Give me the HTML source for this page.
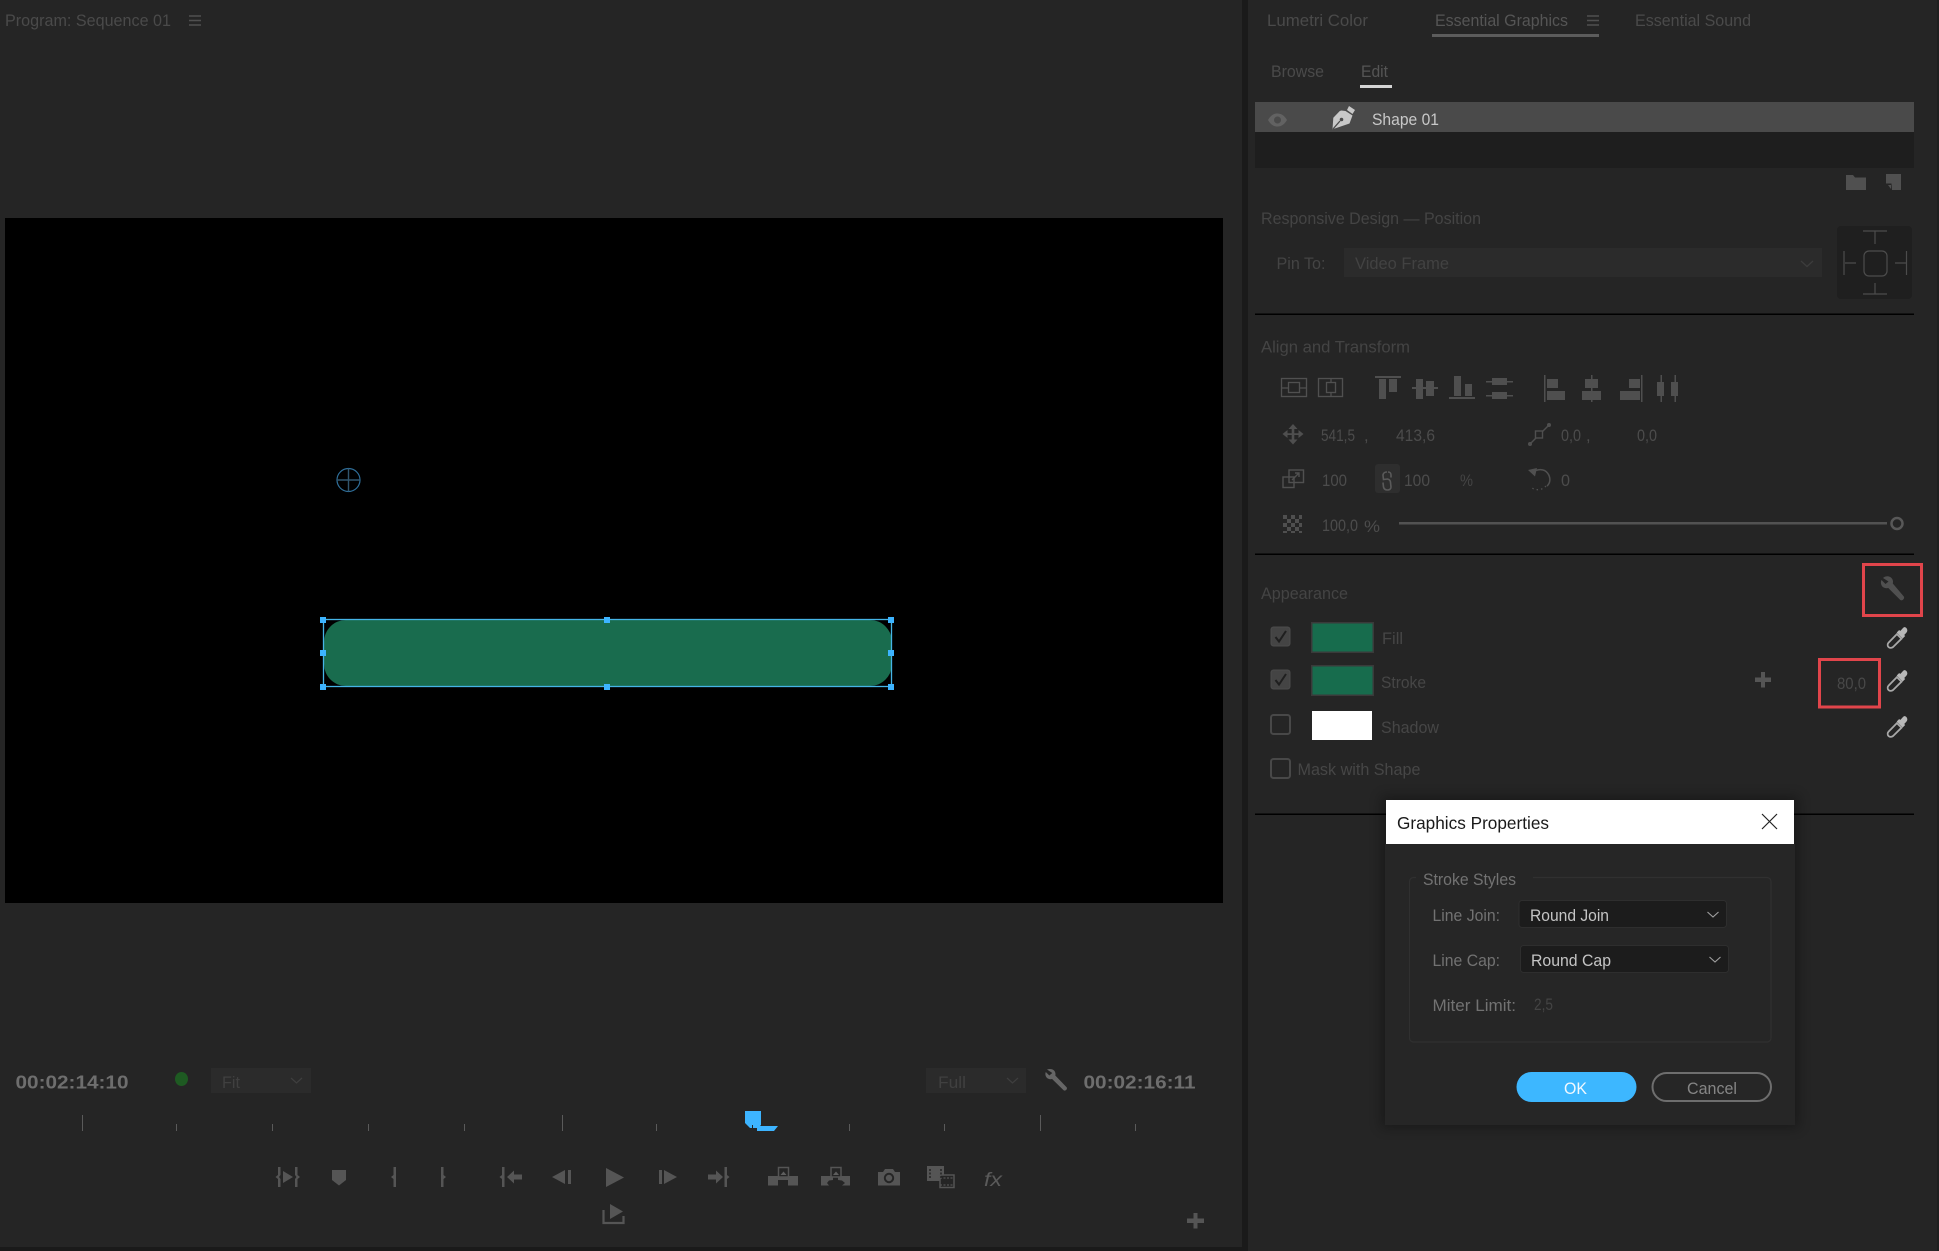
<!DOCTYPE html>
<html lang="en"><head><meta charset="utf-8"><title>Program: Sequence 01 - Essential Graphics</title>
<style>
html,body{margin:0;padding:0;background:#252525;width:1939px;height:1251px;overflow:hidden}
svg{display:block}
text{font-family:"Liberation Sans",sans-serif;font-size:16.5px;fill:#4a4a4a}
.g{fill:#555}
.v{fill:#4c4c4c}
.dlg{fill:#727272;font-size:16.5px}
</style></head><body>
<svg xmlns="http://www.w3.org/2000/svg" width="1939" height="1251" viewBox="0 0 1939 1251">
<defs>
<filter id="sh" x="-10%" y="-10%" width="120%" height="120%"><feGaussianBlur stdDeviation="6"/></filter>
<g id="drop">
<path d="M18.500 .8c1.500-.6 3.200 1 3.300 2.800.1 1.200-.5 2.200-1.300 3l-1.800 1.900 1 1-2.500 2.500-6-6 2.500-2.500 1 1 1.800-1.900c.7-.8 1.400-1.500 2-1.800z" fill="#b8b8b8"/>
<path d="M11.400 7.600l4.600 4.600-8.400 8.300c-1.500 1.200-3.500 1.100-4.600 0s-1.100-3 .1-4.400z" fill="none" stroke="#a8a8a8" stroke-width="1.800"/>
</g>
<g id="chk"><rect x="1" y="1" width="19" height="19" rx="2.500" fill="#444" stroke="#4c4c4c"/><path d="M5.500 11l3.500 4.500 7-10.500" fill="none" stroke="#1f1f1f" stroke-width="2"/></g>
</defs>

<rect width="1939" height="1251" fill="#252525"/>
<!-- gutters -->
<rect x="1242" y="0" width="6" height="1251" fill="#1a1a1a"/>
<rect x="0" y="1247" width="1242" height="4" fill="#1a1a1a"/>
<rect x="1937" y="0" width="2" height="1251" fill="#1f1f1f"/>

<!-- program header -->
<text x="5" y="26" textLength="166" lengthAdjust="spacingAndGlyphs">Program: Sequence 01</text>
<path d="M189 16h12M189 20.500h12M189 25h12" stroke="#505050" stroke-width="1.500"/>

<!-- video -->
<rect x="5" y="218" width="1218" height="685" fill="#000"/>
<ellipse cx="348.500" cy="480" rx="11.500" ry="11.500" fill="none" stroke="#2f6f9a" stroke-width="1.200"/>
<path d="M337 480h23M348.500 468.500v23" stroke="#31566e" stroke-width="1.400"/>
<rect x="324" y="620" width="568" height="66" rx="22" fill="#196c4e"/>
<rect x="323.500" y="619.500" width="568" height="67" fill="none" stroke="#45b4e6" stroke-width="1.300"/>
<g fill="#3db4ff">
<rect x="320" y="617" width="6" height="6"/><rect x="604" y="617" width="6" height="6"/><rect x="888" y="617" width="6" height="6"/>
<rect x="320" y="650" width="6" height="6"/><rect x="888" y="650" width="6" height="6"/>
<rect x="320" y="684" width="6" height="6"/><rect x="604" y="684" width="6" height="6"/><rect x="888" y="684" width="6" height="6"/>
</g>

<!-- timecode row -->
<text x="15.500" y="1088.500" textLength="113" lengthAdjust="spacingAndGlyphs" style="font-size:18.500px;fill:#6e6e6e;font-weight:bold">00:02:14:10</text>
<ellipse cx="181.500" cy="1079" rx="6.500" ry="7" fill="#1e5a22"/>
<rect x="211" y="1068" width="100" height="25" fill="#2b2b2b"/>
<text x="222" y="1088" textLength="18" lengthAdjust="spacingAndGlyphs" style="fill:#404040">Fit</text>
<path d="M291 1078l5.500 5 5.500-5" fill="none" stroke="#3f3f3f" stroke-width="1.200"/>
<rect x="926" y="1068" width="100" height="25" fill="#2b2b2b"/>
<text x="938" y="1088" textLength="28" lengthAdjust="spacingAndGlyphs" style="fill:#404040">Full</text>
<path d="M1007 1078l5.500 5 5.500-5" fill="none" stroke="#3f3f3f" stroke-width="1.200"/>
<path d="M1047 1069.500c3-1 6-.5 7.500 1.500 1 1.500 1.200 3.200.8 4.500l11.300 11.800c1.300 1.700-1.200 4.300-3 3l-11.500-11.300c-2 .6-4.200 0-5.500-1.500-1.300-1.600-1.600-3.700-.8-5.500l3.500 3.500 3-2.500z" fill="#666"/>
<text x="1083.500" y="1088.500" textLength="112" lengthAdjust="spacingAndGlyphs" style="font-size:18.500px;fill:#6e6e6e;font-weight:bold">00:02:16:11</text>

<!-- ruler -->
<g stroke="#5a5a5a" stroke-width="1">
<path d="M82.500 1115v16M562.500 1115v16M1040.500 1115v16"/>
<path d="M176.500 1124v7M272.500 1124v7M368.500 1124v7M464.500 1124v7M656.500 1124v7M849.500 1124v7M944.500 1124v7M1135.500 1124v7"/>
</g>
<path d="M745 1111h16v14l-3 3h-8l-5-5z" fill="#3db4ff"/>
<path d="M757 1126h21l-4 5h-17z" fill="#3db4ff"/>
<path d="M752.500 1125v6" stroke="#252525"/>

<!-- transport -->
<g fill="#555">
<path d="M278 1167h2.500v8l-1.500 2 1.500 2v8H278v-8l-2.500-2 2.500-2zM295 1167h2.500v8l2.500 2-2.500 2v8H295v-8l1.500-2-1.500-2z"/>
<path d="M283 1171l10 6-10 6z"/>
<path d="M332 1170h14v10l-7 5.500-7-5.500z"/>
<path d="M393.500 1167h2.500v20h-2.500v-8l-2.500-2 2.500-2zM441 1167h2.500v8l2.500 2-2.500 2v8H441z"/>
<path d="M502 1167h2.500v20H502v-8l-2.500-2 2.500-2zM507 1177l7-6.500v4h8v5h-8v4z"/>
<path d="M552 1177l13-7v14zM568 1170h3v14h-3z"/>
<path d="M606 1168l18 9.500-18 9.500z"/>
<path d="M659 1170h3v14h-3zM664 1170l13 7-13 7z"/>
<path d="M708 1174.500h8v-4l7 6.500-7 6.500v-4h-8zM724.500 1167h2.500v8l2.500 2-2.500 2v8h-2.500z"/>
<!-- lift -->
<path d="M768 1176h30v9.500h-10v-5.500h-10v5.500h-10z"/>
<!-- extract -->
<path d="M821 1176h12v4l-4 .5-2 2.500 2 2.500h-8zM838 1176h12v9.500h-8l3-2.500-3-2.500-4-.5z"/>
<path d="M821 1178l6 4-6 4zM850 1178l-6 4 6 4z" fill="#252525" opacity="0"/>
<path d="M878 1172h5l2-3h8l2 3h5v13.500h-22z"/>
<path d="M927 1166h17v15h-17z"/>
<path d="M1187 1218.500h6.500v-5.500h4v5.500h6.500v4.500h-6.500v5.500h-4v-5.500h-6.500z"/>
</g>
<rect x="778.500" y="1167.500" width="10" height="9.500" fill="#252525" stroke="#555" stroke-width="1.500"/>
<path d="M780.500 1175l3-3.500 3 3.500z" fill="#5f5f5f"/>
<rect x="831" y="1167.500" width="10" height="9.500" fill="#252525" stroke="#555" stroke-width="1.500"/>
<path d="M833 1175l3-3.500 3 3.500z" fill="#5f5f5f"/>
<circle cx="889" cy="1178" r="4.200" fill="none" stroke="#252525" stroke-width="2"/>
<rect x="940" y="1175" width="14" height="12.500" fill="#252525" stroke="#555" stroke-width="1.500"/>
<path d="M940 1178h14M940 1185h14" stroke="#555" stroke-width="1.200" stroke-dasharray="2 1.500"/>
<path d="M930 1169v10M941 1169v10" stroke="#252525" stroke-width="1.500" stroke-dasharray="2 1.500"/>
<text x="984" y="1186" textLength="18" lengthAdjust="spacingAndGlyphs" style="font-size:19px;font-style:italic;fill:#5a5a5a">fx</text>
<path d="M603.500 1210v13h20v-7" fill="none" stroke="#555" stroke-width="2.200"/>
<path d="M610 1204l13 7.500-13 7.500z" fill="#555"/>

<!-- tabs -->
<text x="1267" y="26" textLength="101" lengthAdjust="spacingAndGlyphs">Lumetri Color</text>
<text x="1435" y="26" textLength="133" lengthAdjust="spacingAndGlyphs" class="g">Essential Graphics</text>
<path d="M1587 16h12M1587 20.500h12M1587 25h12" stroke="#505050" stroke-width="1.500"/>
<rect x="1432" y="34" width="167" height="3" fill="#5c5c5c"/>
<text x="1635" y="26" textLength="116" lengthAdjust="spacingAndGlyphs">Essential Sound</text>
<text x="1271" y="77" textLength="53" lengthAdjust="spacingAndGlyphs">Browse</text>
<text x="1361" y="77" textLength="27" lengthAdjust="spacingAndGlyphs" class="g">Edit</text>
<rect x="1360" y="85" width="32" height="3" fill="#d4d4d4"/>

<!-- layers -->
<rect x="1255" y="132" width="659" height="36" fill="#1e1e1e"/>
<rect x="1255" y="102" width="659" height="30" fill="#4a4a4a"/>
<path d="M1268 120c3-5 6-6.500 9.500-6.500s6.500 1.500 9.500 6.500c-3 5-6 6.500-9.500 6.500s-6.500-1.500-9.500-6.500z" fill="#626262"/>
<circle cx="1277.500" cy="120" r="3.500" fill="#4a4a4a"/>
<path d="M1349 106l6 4-2.500 4-5.500-4zM1345.500 111l7 4.500-3 8-17 5.800.8-11.500 6.500-6.800 1.500-.5z" fill="#c8c8c8"/>
<path d="M1333 129l7-8" stroke="#4a4a4a" stroke-width="1.300"/>
<circle cx="1341.500" cy="119.500" r="1.800" fill="#4a4a4a"/>
<text x="1372" y="125" textLength="67" lengthAdjust="spacingAndGlyphs" style="fill:#c8c8c8">Shape 01</text>
<path d="M1846 175h7l2 2.500h11v12.500h-20z" fill="#505050"/>
<path d="M1886 174h15v16h-9l-.5-6.500h-5.500z" fill="#505050"/>
<path d="M1888 185h3v4z" fill="#505050"/>

<!-- responsive -->
<text x="1261" y="224" textLength="220" lengthAdjust="spacingAndGlyphs" style="fill:#444">Responsive Design — Position</text>
<text x="1276.500" y="269" textLength="49" lengthAdjust="spacingAndGlyphs" style="fill:#444">Pin To:</text>
<rect x="1344" y="248" width="478" height="29" fill="#2b2b2b"/>
<text x="1355" y="269" textLength="94" lengthAdjust="spacingAndGlyphs" style="fill:#424242">Video Frame</text>
<path d="M1801 261l6 5.500 6-5.500" fill="none" stroke="#3d3d3d" stroke-width="1.200"/>
<rect x="1837" y="226" width="75" height="73" rx="4" fill="#1f1f1f"/>
<g fill="none" stroke="#4c4c4c" stroke-width="1.200">
<path d="M1863 231h24M1875 231v13"/>
<rect x="1864" y="251" width="23" height="25" rx="5"/>
<path d="M1844 251v24M1845 263h11M1906.500 251v24M1895 263h11"/>
<path d="M1875 283v11M1863 294h24"/>
</g>
<rect x="1255" y="313.500" width="659" height="1.500" fill="#000"/>

<!-- align and transform -->
<text x="1261" y="352.500" textLength="149" lengthAdjust="spacingAndGlyphs" style="fill:#444">Align and Transform</text>
<g fill="none" stroke="#505050" stroke-width="1.300">
<rect x="1281.500" y="378.500" width="25" height="18"/><rect x="1288.500" y="382.500" width="11" height="10"/><path d="M1281 388h7M1300 388h7"/>
<rect x="1318.500" y="378.500" width="24" height="18"/><rect x="1326.500" y="382.500" width="9" height="10"/><path d="M1331 378v4M1331 392v4"/>
</g>
<g fill="#4f4f4f">
<path d="M1375 376h26v2h-26zM1379 379h7v20h-7zM1389 379h8v13h-8z"/>
<path d="M1412 387h26v2h-26zM1416 379h7v20h-7zM1426 381h8v15h-8z"/>
<path d="M1449 397h26v2h-26zM1454 376h7v20h-7zM1465 384h7v12h-7z"/>
<path d="M1486 381h27v1.500h-27zM1492 378h15v7h-15zM1486 395h27v1.500h-27zM1492 392h15v7h-15z"/>
<path d="M1544 375h1.500v27h-1.500zM1547 379h11v9h-11zM1547 391h18v9h-18z"/>
<path d="M1591 375h1.500v27h-1.500zM1585 379h13v9h-13zM1582 391h19v9h-19z"/>
<path d="M1641 375h1.500v27h-1.500zM1629 379h11v9h-11zM1620 391h20v9h-20z"/>
<path d="M1660.500 375h1.500v27h-1.500zM1657 382h7v14h-7zM1674.500 375h1.500v27h-1.500zM1671 382h7v14h-7z"/>
</g>
<path d="M1293 424l4.500 5h-3.200v4.200h4.200v-3.200l5 4-5 4v-3h-4.200v4.500h3.200l-4.500 5-4.500-5h3.200v-4.500h-4.200v3l-5-4 5-4v3.200h4.200v-4.200h-3.200z" fill="#4f4f4f"/>
<text x="1321" y="441" textLength="34" lengthAdjust="spacingAndGlyphs" class="v">541,5</text>
<text x="1364" y="441" class="v">,</text>
<text x="1396" y="441" textLength="39" lengthAdjust="spacingAndGlyphs" class="v">413,6</text>
<g fill="none" stroke="#4f4f4f" stroke-width="1.400">
<path d="M1530 444l19-19"/><rect x="1535.500" y="431" width="7" height="7" fill="#252525"/>
</g>
<circle cx="1530" cy="444" r="2" fill="#4f4f4f"/><circle cx="1549" cy="425" r="2" fill="#4f4f4f"/>
<text x="1561" y="441" textLength="20" lengthAdjust="spacingAndGlyphs" class="v">0,0</text>
<text x="1586" y="441" class="v">,</text>
<text x="1637" y="441" textLength="20" lengthAdjust="spacingAndGlyphs" class="v">0,0</text>

<g fill="none" stroke="#505050" stroke-width="1.400">
<rect x="1283" y="477" width="11" height="10.500"/><rect x="1289" y="470" width="14.500" height="12.500"/><path d="M1292 480l7-7M1295 473h4v4"/>
</g>
<text x="1322" y="486" textLength="25" lengthAdjust="spacingAndGlyphs" class="v">100</text>
<rect x="1375" y="464" width="25" height="29" rx="3" fill="#2e2e2e"/>
<path d="M1387 472c-2.500 0-4 1.500-4 3.500l.5 4 4-.5c2 .5 3 1.500 3 3.500l.5 4.500c0 2-1.500 3-3.500 3s-3.500-1-4-3l-.5-4.500M1388 472c2 0 3 1.500 3 3v2.500" fill="none" stroke="#5a5a5a" stroke-width="1.600"/>
<text x="1404" y="486" textLength="26" lengthAdjust="spacingAndGlyphs" class="v">100</text>
<text x="1460" y="486" textLength="13" lengthAdjust="spacingAndGlyphs" style="fill:#444">%</text>
<path d="M1532 473c5-4.500 12-4.500 15.500 0 3.500 4.500 3 10-.5 13" fill="none" stroke="#505050" stroke-width="1.500"/>
<path d="M1546 486c-4 4.500-11 5-15 1" fill="none" stroke="#505050" stroke-width="1.300" stroke-dasharray="1.500 3"/>
<path d="M1528 470l9-2-2 8.500z" fill="#505050"/>
<text x="1561" y="486" textLength="9" lengthAdjust="spacingAndGlyphs" class="v">0</text>

<path d="M1283 515h4v4h-4zM1291 515h4v4h-4zM1299 515h3v4h-3zM1287 519h4v4h-4zM1295 519h4v4h-4zM1283 523h4v4h-4zM1291 523h4v4h-4zM1299 523h3v4h-3zM1287 527h4v4h-4zM1295 527h4v4h-4zM1283 531h4v2h-4zM1291 531h4v2h-4zM1299 531h3v2h-3z" fill="#4f4f4f"/>
<text x="1322" y="531" textLength="36" lengthAdjust="spacingAndGlyphs" class="v">100,0</text>
<text x="1364" y="532" textLength="16" lengthAdjust="spacingAndGlyphs" class="v">%</text>
<rect x="1399" y="522" width="488" height="2.500" fill="#525252"/>
<circle cx="1897" cy="523.500" r="5.500" fill="none" stroke="#585858" stroke-width="2.500"/>
<rect x="1255" y="553.500" width="659" height="1.500" fill="#000"/>

<!-- appearance -->
<text x="1261" y="599" textLength="87" lengthAdjust="spacingAndGlyphs" style="fill:#444">Appearance</text>
<path d="M1883 578c3-2.500 6.500-2 8.500 0 1.500 1.500 1.800 3.500 1.300 5.500l11 13c1.300 1.900-1.500 4.800-3.500 3.500l-12-12c-2 .6-4.500 0-6-1.500-1.500-2-1.800-4.500-.8-6.500l4 4 3-2.500z" fill="#505050"/>
<rect x="1863.500" y="564.500" width="58" height="51" fill="none" stroke="#e1454b" stroke-width="3"/>

<use href="#chk" x="1270" y="626"/>
<rect x="1311" y="622" width="63" height="31" fill="#3a3a3a"/><rect x="1312.500" y="623.500" width="60" height="28" fill="#176c4d"/>
<text x="1382" y="644" textLength="21" lengthAdjust="spacingAndGlyphs" style="fill:#464646">Fill</text>
<use href="#drop" x="1885.500" y="626.500"/>

<use href="#chk" x="1270" y="669"/>
<rect x="1311" y="665" width="63" height="31" fill="#3a3a3a"/><rect x="1312.500" y="666.500" width="60" height="28" fill="#176c4d"/>
<text x="1381" y="688" textLength="45" lengthAdjust="spacingAndGlyphs" style="fill:#464646">Stroke</text>
<path d="M1755 677.500h6v-5.500h4v5.500h6v4.500h-6v5.500h-4v-5.500h-6z" fill="#555"/>
<text x="1837" y="689" textLength="29" lengthAdjust="spacingAndGlyphs" style="fill:#484848">80,0</text>
<rect x="1819.500" y="659.500" width="60" height="47.500" fill="none" stroke="#e1454b" stroke-width="3"/>
<use href="#drop" x="1885.500" y="669.500"/>

<rect x="1271" y="715" width="19" height="19" rx="2.500" fill="none" stroke="#484848" stroke-width="2"/>
<rect x="1312" y="711" width="60" height="29" fill="#fff"/>
<text x="1381" y="733" textLength="58" lengthAdjust="spacingAndGlyphs" style="fill:#464646">Shadow</text>
<use href="#drop" x="1885.500" y="715.500"/>

<rect x="1271" y="759" width="19" height="19" rx="2.500" fill="none" stroke="#484848" stroke-width="2"/>
<text x="1297.500" y="775" textLength="123" lengthAdjust="spacingAndGlyphs" style="fill:#464646">Mask with Shape</text>
<rect x="1255" y="813.500" width="659" height="1.500" fill="#000"/>

<!-- dialog -->
<rect x="1381" y="796" width="418" height="332" fill="#000" opacity=".3" filter="url(#sh)"/>
<rect x="1385" y="844" width="410" height="281" fill="#262626"/>
<rect x="1386" y="800" width="408" height="44" fill="#fff"/>
<text x="1397" y="829" textLength="152" lengthAdjust="spacingAndGlyphs" style="font-size:17.500px;fill:#1a1a1a">Graphics Properties</text>
<path d="M1762 814l15 15M1777 814l-15 15" stroke="#222" stroke-width="1.200" fill="none"/>
<rect x="1409.500" y="877.500" width="361.500" height="164.500" rx="4" fill="none" stroke="#303030" stroke-width="1.200"/>
<rect x="1416" y="874" width="117" height="8" fill="#262626"/>
<text x="1423" y="885" textLength="93" lengthAdjust="spacingAndGlyphs" class="dlg">Stroke Styles</text>
<text x="1432.500" y="921" textLength="67.500" lengthAdjust="spacingAndGlyphs" class="dlg">Line Join:</text>
<rect x="1519" y="900.500" width="207.500" height="27" rx="3" fill="#1c1c1c" stroke="#2e2e2e"/>
<text x="1530" y="921" textLength="79" lengthAdjust="spacingAndGlyphs" style="fill:#c4c4c4">Round Join</text>
<path d="M1707.500 912l5.500 5 5.500-5" fill="none" stroke="#a0a0a0" stroke-width="1.100"/>
<text x="1432.500" y="966" textLength="67.500" lengthAdjust="spacingAndGlyphs" class="dlg">Line Cap:</text>
<rect x="1520.500" y="945.500" width="208" height="27" rx="3" fill="#1c1c1c" stroke="#2e2e2e"/>
<text x="1531" y="966" textLength="80" lengthAdjust="spacingAndGlyphs" style="fill:#c4c4c4">Round Cap</text>
<path d="M1709.500 957l5.500 5 5.500-5" fill="none" stroke="#a0a0a0" stroke-width="1.100"/>
<text x="1432.500" y="1011" textLength="83.500" lengthAdjust="spacingAndGlyphs" class="dlg">Miter Limit:</text>
<text x="1534" y="1010" textLength="19" lengthAdjust="spacingAndGlyphs" style="fill:#444">2,5</text>
<rect x="1516.500" y="1072" width="120" height="30" rx="15" fill="#3db7ff"/>
<text x="1564" y="1094" textLength="23" lengthAdjust="spacingAndGlyphs" style="fill:#f0f8ff">OK</text>
<rect x="1652.500" y="1073" width="118.500" height="28" rx="14" fill="none" stroke="#6e6e6e" stroke-width="2"/>
<text x="1687" y="1094" textLength="50" lengthAdjust="spacingAndGlyphs" style="fill:#858585">Cancel</text>
</svg>
</body></html>
